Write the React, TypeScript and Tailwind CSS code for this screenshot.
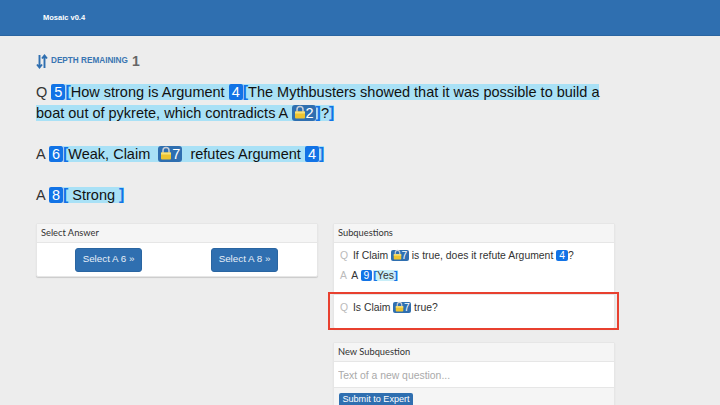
import type { ReactNode } from "react";

function Lock({ small }: { small?: boolean }) {
  return (
    <svg
      viewBox="0 0 12 14"
      className={small ? "inline-block align-[-1px] w-[9px] h-[11px]" : "inline-block align-[-1px] w-[12px] h-[14px]"}
    >
      <path d="M3 7V4.5a3 3 0 0 1 6 0V7" fill="none" stroke="#c9ced6" strokeWidth="1.5" />
      <rect x="1" y="6.5" width="10" height="7" rx="1" fill="#eec430" />
      <rect x="1" y="6.5" width="10" height="2" fill="#f8e27a" />
    </svg>
  );
}

function Ref({ n }: { n: number }) {
  return <span className="bg-[#1273e6] text-white rounded-[2px] px-[3px]">{n}</span>;
}

function LockedRef({ n, small }: { n: number; small?: boolean }) {
  return (
    <span className={small ? "bg-[#2f6fb0] text-white rounded-[2px] px-[1.5px]" : "bg-[#2f6fb0] text-white rounded-[3px] px-[2px]"}>
      <Lock small={small} />
      {n}
    </span>
  );
}

function Br() {
  return <span className="text-[#1273e6] font-bold text-[1.1em] leading-none">[</span>;
}

function Cl() {
  return <span className="text-[#1273e6] font-bold text-[1.1em] leading-none">]</span>;
}

function Hi({ children }: { children: ReactNode }) {
  return <span className="bg-[#a9e1f6] [box-decoration-break:clone]">{children}</span>;
}

function Panel({ title, children }: { title: string; children: ReactNode }) {
  return (
    <div className="bg-white rounded-[2px] shadow-[0_1px_1px_rgba(0,0,0,0.15)] border border-[#e6e6e6]">
      <div className="h-[19px] bg-[#f5f5f5] border-b border-[#e6e6e6] px-[4px] text-[9.3px] leading-[18px] text-[#333] font-['Lato',sans-serif]">
        {title}
      </div>
      {children}
    </div>
  );
}

function SelectButton({ children }: { children: ReactNode }) {
  return (
    <button className="h-[24px] w-[67px] bg-[#2f6fb0] border border-[#2a65a1] rounded-[3px] text-[#e8f0f8] text-[9.8px]">
      {children}
    </button>
  );
}

export default function App() {
  return (
    <div className="w-[720px] h-[405px] overflow-hidden bg-[#ededed] font-['Liberation_Sans',sans-serif] text-[#222]">
      <div className="h-[36px] bg-[#2f6fb0] border-b border-[#2a65a1] pl-[43px] pt-[12px] text-[7.5px] leading-[11px] font-bold text-white">
        Mosaic v0.4
      </div>

      <div className="pl-[36px] pt-[16px] relative">
        {/* depth counter */}
        <div className="flex items-center h-[18px] gap-[3px]">
          <svg width="12" height="15" viewBox="0 0 12 15">
            <path d="M3.5 1v12M1 10.5l2.5 3 2.5-3" fill="none" stroke="#2f6fb0" strokeWidth="1.9" />
            <path d="M8.5 14V2M6 4.5l2.5-3 2.5 3" fill="none" stroke="#2f6fb0" strokeWidth="1.9" />
          </svg>
          <span className="text-[8.2px] font-bold text-[#3a76b2]">DEPTH REMAINING</span>
          <span className="text-[14px] text-[#666] font-bold ml-[1px]">1</span>
        </div>

        <div className="w-[580px] text-[14.5px] leading-[21px] mt-[12px] text-[#111]">
          <div>
            <span className="text-[#333]">Q </span>
            <Ref n={5} />
            <Hi>
              <Br />
              How strong is Argument <Ref n={4} />
              <Br />
              The Mythbusters showed that it was possible to build a boat out of pykrete, which contradicts A{" "}
              <LockedRef n={2} />
              <Cl />?<Cl />
            </Hi>
          </div>
          <div className="mt-[20px]">
            <span className="text-[#333]">A </span>
            <Ref n={6} />
            <Hi>
              <Br />
              Weak, Claim &nbsp;
              <LockedRef n={7} />
              &nbsp; refutes Argument <Ref n={4} />
              <Cl />
            </Hi>
          </div>
          <div className="mt-[20px]">
            <span className="text-[#333]">A </span>
            <Ref n={8} />
            <Hi>
              <Br /> Strong <Cl />
            </Hi>
          </div>
        </div>

        <div className="flex gap-[15px] mt-[17px]">
          <div className="w-[282px]">
            <Panel title="Select Answer">
              <div className="h-[33px] flex items-center pl-[38px] gap-[69px]">
                <SelectButton>Select A 6 »</SelectButton>
                <SelectButton>Select A 8 »</SelectButton>
              </div>
            </Panel>
          </div>

          <div className="w-[282px] flex flex-col gap-[13px]">
            <Panel title="Subquestions">
              <div className="text-[10.4px] text-[#333]">
                <div className="h-[52px] px-[6px] pt-[3px] leading-[20px] border-b border-[#e6e6e6]">
                  <div>
                    <span className="text-[#bbb] mr-[2px]">Q</span> If Claim <LockedRef n={7} small /> is true, does it
                    refute Argument <Ref n={4} />?
                  </div>
                  <div>
                    <span className="text-[#bbb] mr-[2px]">A</span> A <Ref n={9} />
                    <span className="bg-[#c8eef8] ml-[1px]">
                      <Br />
                      Yes
                      <Cl />
                    </span>
                  </div>
                </div>
                <div className="h-[33px] px-[6px] pt-[3px] leading-[20px]">
                  <span className="text-[#bbb] mr-[2px]">Q</span> Is Claim <LockedRef n={7} small /> true?
                </div>
              </div>
            </Panel>
            <Panel title="New Subquestion">
              <input
                readOnly
                placeholder="Text of a new question..."
                className="w-full h-[24px] px-[4px] text-[10.4px] outline-none border-b border-[#e6e6e6] placeholder:text-[#aaa]"
              />
              <div className="bg-[#f5f5f5] px-[5px] pt-[5px] h-[30px]">
                <button className="block h-[22px] pb-[8px] bg-[#2f6fb0] rounded-[2px] text-white text-[9.1px] w-[74px] whitespace-nowrap">
                  Submit to Expert
                </button>
              </div>
            </Panel>
          </div>
        </div>

        {/* red highlight over the second subquestion */}
        <div className="absolute left-[328px] top-[256px] w-[291px] h-[38px] border-2 border-[#e8402f] pointer-events-none" />
      </div>
    </div>
  );
}
